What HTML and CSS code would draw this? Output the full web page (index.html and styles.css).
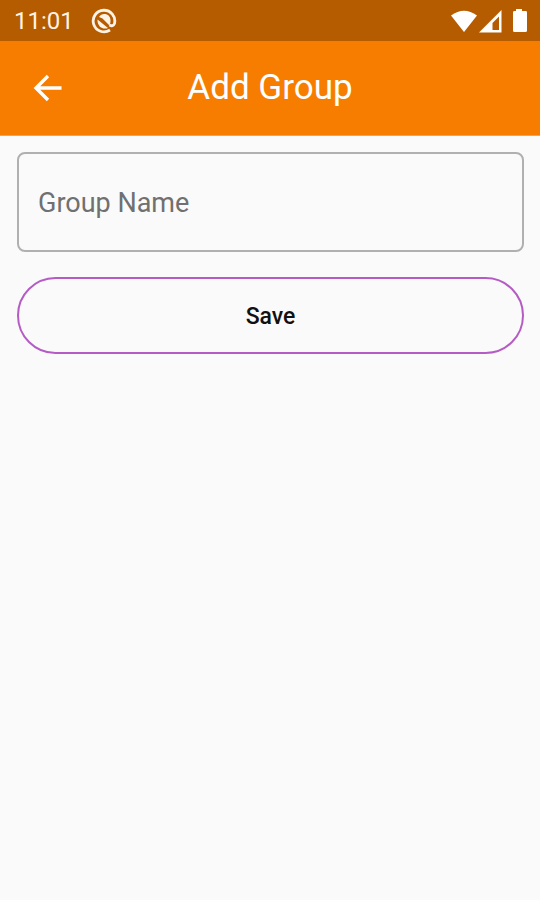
FILE: index.html
```html
<!DOCTYPE html>
<html lang="en">
<head>
<meta charset="utf-8">
<meta name="viewport" content="width=device-width, initial-scale=1">
<title>Add Group</title>
<link rel="stylesheet" href="styles.css">
</head>
<body>
<div class="status">
  <span class="clock">11:01</span>
  <svg class="alert" width="26" height="26" viewBox="0 0 26 26" aria-hidden="true">
    <path d="M19 22A10.800 10.800 0 1 1 23.500 15.500Q22 19 18.500 17" fill="none" stroke="#fff3e6" stroke-width="2.800"/>
    <path d="M8 9C10 5.500 15 5 18 8C20 10.500 20 14 18.500 17.500L11.500 10.500Z" fill="#fff3e6"/>
    <path d="M6.500 11.500L17 20C12 22 6 18.500 6.500 11.500Z" fill="#fff3e6"/>
  </svg>
  <svg class="signals" width="78" height="26" viewBox="0 0 78 26" aria-hidden="true">
    <path d="M1 7.500Q14 -2 27 7.500L14 24Z" fill="#fff"/>
    <path d="M51.500 2V24.500H29Z" fill="#fff"/>
    <path d="M49 8.500V22H42.500V15Z" fill="#b55b00"/>
    <path d="M66 1H72V3H76Q77 3 77 4.500V22.500Q77 24 75.500 24H64.500Q63 24 63 22.500V4.500Q63 3 64 3H66Z" fill="#fff"/>
  </svg>
</div>
<header class="bar">
  <button class="back" type="button" aria-label="Back">
    <svg width="30" height="30" viewBox="0 0 30 30" aria-hidden="true">
      <path d="M28.500 15H3M15 3L3 15L15 27" fill="none" stroke="#fff" stroke-width="3.400"/>
    </svg>
  </button>
  <h1 class="title">Add Group</h1>
</header>
<main>
  <form class="form">
    <input class="field" type="text" placeholder="Group Name" aria-label="Group Name">
    <button class="save" type="button">Save</button>
  </form>
</main>
</body>
</html>
```
FILE: styles.css
```css
* { box-sizing: border-box; }
body {
  margin: 0;
  min-height: 100vh;
  background: #fafafa;
  font-family: Roboto, "Liberation Sans", sans-serif;
}
.status {
  display: flex;
  align-items: center;
  height: 41px;
  padding: 1px 12px 0 14px;
  background: #b55b00;
}
.clock {
  color: #fff3e6;
  font-size: 24px;
  line-height: 28px;
}
.alert { margin-left: 17px; }
.signals { margin-left: auto; }
.bar {
  display: grid;
  grid-template-columns: 62px 1fr 62px;
  align-items: center;
  height: 95px;
  padding: 0 17px;
  background: #f77d00;
  border-bottom: 1px solid #eba269;
}
.back {
  display: flex;
  align-items: center;
  justify-content: center;
  height: 62px;
  padding: 0;
  border: 0;
  background: none;
}
.title {
  margin: 0;
  color: #fff;
  font-size: 35px;
  font-weight: 400;
  line-height: 44px;
  text-align: center;
}
.form {
  display: flex;
  flex-direction: column;
  gap: 25px;
  padding: 16px 16px 16px 17px;
}
.field {
  width: 100%;
  padding: 33px 19px 31px;
  border: 2px solid #b0b0b0;
  border-radius: 8px;
  background: transparent;
  color: #212121;
  font: 400 27px/32px Roboto, "Liberation Sans", sans-serif;
}
.field::placeholder { color: #707070; opacity: 1; }
.save {
  padding: 23px 22px 21px;
  border: 2px solid #b45cc4;
  border-radius: 40px;
  background: transparent;
  color: #111;
  font: 500 23px/29px Roboto, "Liberation Sans", sans-serif;
}
```
